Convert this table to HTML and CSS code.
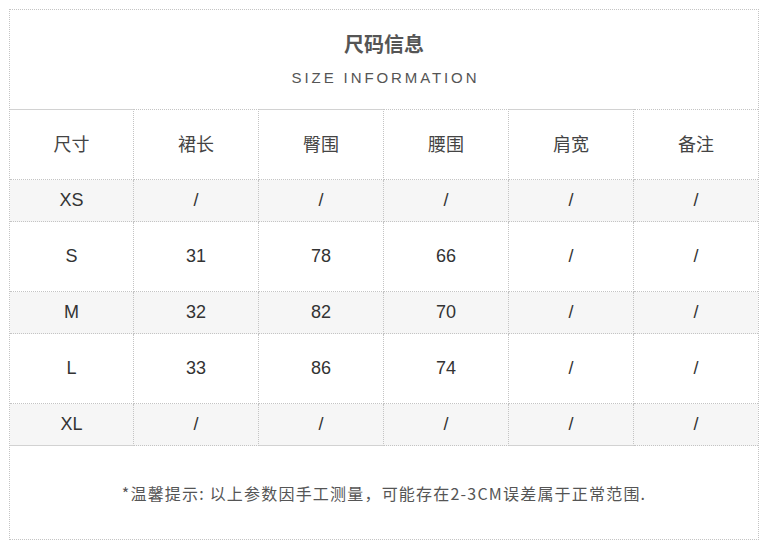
FILE: index.html
```html
<!DOCTYPE html>
<html lang="zh-CN">
<head>
<meta charset="utf-8">
<title>尺码信息</title>
<link rel="stylesheet" href="styles.css">
</head>
<body>
<div class="sheet">
  <div class="head">
    <h1 class="title">尺码信息</h1>
    <p class="subtitle">SIZE INFORMATION</p>
  </div>
  <table class="size">
    <colgroup>
      <col class="c-first"><col class="c-mid"><col class="c-mid"><col class="c-mid"><col class="c-mid"><col class="c-last">
    </colgroup>
    <tr class="r-head">
      <td class="odd">尺寸</td><td>裙长</td><td class="odd">臀围</td><td>腰围</td><td class="odd">肩宽</td><td>备注</td>
    </tr>
    <tr class="r-short shade">
      <td class="odd">XS</td><td>/</td><td class="odd">/</td><td>/</td><td class="odd">/</td><td>/</td>
    </tr>
    <tr class="r-tall">
      <td class="odd">S</td><td>31</td><td class="odd">78</td><td>66</td><td class="odd">/</td><td>/</td>
    </tr>
    <tr class="r-short shade">
      <td class="odd">M</td><td>32</td><td class="odd">82</td><td>70</td><td class="odd">/</td><td>/</td>
    </tr>
    <tr class="r-tall">
      <td class="odd">L</td><td>33</td><td class="odd">86</td><td>74</td><td class="odd">/</td><td>/</td>
    </tr>
    <tr class="r-short shade r-last">
      <td class="odd">XL</td><td>/</td><td class="odd">/</td><td>/</td><td class="odd">/</td><td>/</td>
    </tr>
  </table>
  <div class="note">*温馨提示: 以上参数因手工测量，可能存在2-3CM误差属于正常范围.</div>
</div>
</body>
</html>
```
FILE: styles.css
```css
html, body {
  margin: 0;
  padding: 0;
  background: #fff;
}
body {
  padding: 9px;
}
.sheet {
  width: 748px;
  height: 529px;
  border: 1px dotted #c4c4c4;
  display: flex;
  flex-direction: column;
  font-family: "Liberation Sans", "Noto Sans CJK SC", sans-serif;
  color: #333;
}
.head {
  height: 99px;
  display: flex;
  flex-direction: column;
  align-items: center;
  flex: none;
}
.title {
  margin: 22px 0 0;
  font-family: "Noto Sans CJK SC", sans-serif;
  font-size: 20px;
  line-height: 24px;
  font-weight: 700;
  color: #555;
}
.subtitle {
  margin: 12px 0 0;
  font-size: 15px;
  line-height: 20px;
  letter-spacing: 2.9px;
  color: #555;
  padding-left: 3px;
}
.size {
  border-collapse: separate;
  border-spacing: 0;
  table-layout: fixed;
  width: 748px;
  flex: none;
}
.c-first { width: 124px; }
.c-mid { width: 125px; }
.c-last { width: 124px; }
.size td {
  box-sizing: border-box;
  padding: 0;
  text-align: center;
  vertical-align: middle;
  font-size: 18px;
  color: #333;
  border-right: 1px dotted #c4c4c4;
  border-bottom: 1px dotted #c4c4c4;
}
.size td:last-child {
  border-right: none;
}
.r-head td {
  height: 71px;
  padding-bottom: 3px;
  border-top: 1px dotted #c4c4c4;
  font-family: "Noto Sans CJK SC", sans-serif;
  font-size: 18px;
  line-height: 20px;
  color: #444;
}
.r-head td.odd {
  border-top: 1px solid #d2d2d2;
}
.r-short td { height: 42px; }
.r-tall td { height: 70px; }
.shade td { background: #f6f6f6; }
.r-last td.odd {
  border-bottom: 1px solid #d2d2d2;
}
.note {
  flex: 1;
  display: flex;
  align-items: center;
  justify-content: center;
  font-family: "Noto Sans CJK SC", sans-serif;
  font-size: 16px;
  letter-spacing: 1.2px;
  color: #555;
}
```
